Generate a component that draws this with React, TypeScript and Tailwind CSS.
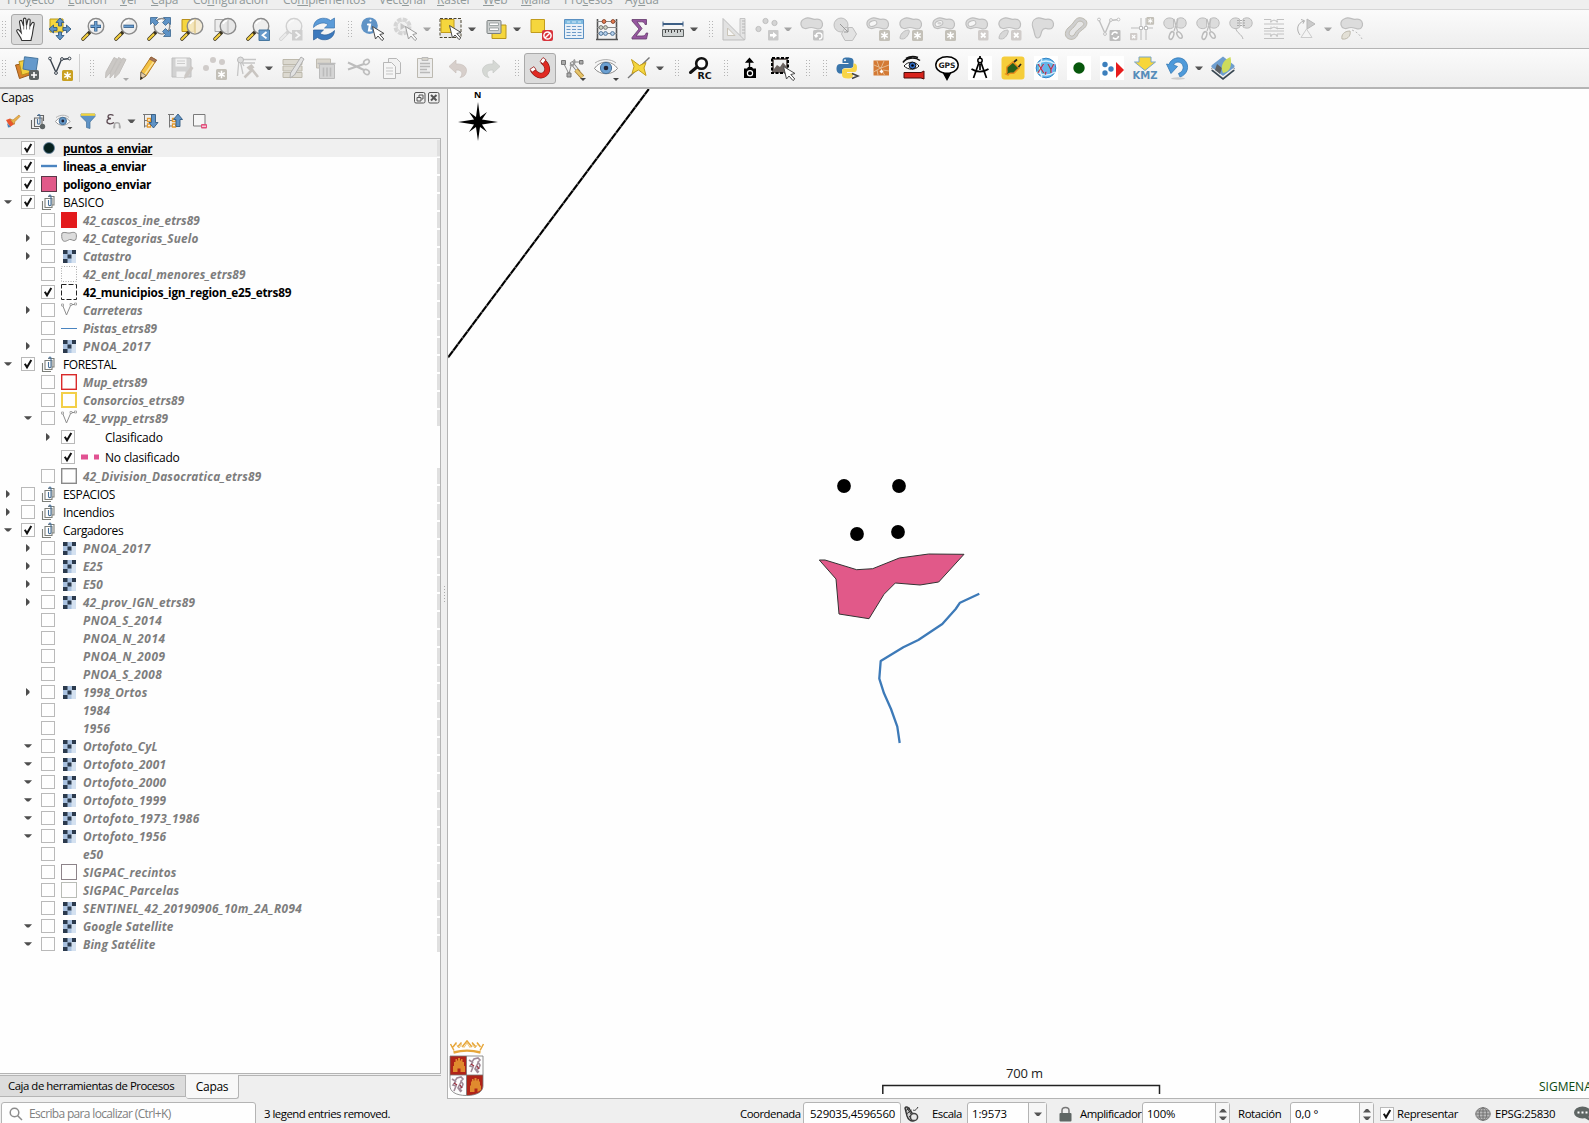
import React from "react";

type P = { children?: React.ReactNode };

/* ---------- shared building blocks ---------- */

const Svg = ({ children }: P) => (
  <svg width="24" height="24" viewBox="0 0 24 24" fill="none" className="shrink-0 overflow-visible">
    {children}
  </svg>
);

const Cell = ({ children, on }: P & { on?: boolean }) => (
  <div className="flex h-8 w-[33px] shrink-0 items-center">
    <div
      className={
        on
          ? "flex h-[31px] w-8 items-center rounded-[3px] border border-[#aaa] bg-[#dcdcdc] pl-[3px]"
          : "flex h-[31px] w-8 items-center pl-1"
      }
    >
      <Svg>{children}</Svg>
    </div>
  </div>
);

const Arrow = ({ dim }: { dim?: boolean }) => (
  <div className="flex w-3 shrink-0 justify-start">
    <svg width="8" height="5" viewBox="0 0 8 5">
      <path d="M0 .5h8L5 4H3z" fill={dim ? "#a5a5a5" : "#555"} />
    </svg>
  </div>
);

const Dots = () => (
  <svg width="5" height="17" viewBox="0 0 5 17" className="shrink-0">
    {[0, 3, 6, 9, 12, 15].map((y) => (
      <g key={y} fill="#b5b5b5">
        <rect x="0" y={y} width="1" height="1" />
        <rect x="3" y={y} width="1" height="1" />
      </g>
    ))}
  </svg>
);

const Grip = () => (
  <div className="flex w-4 shrink-0 justify-start pl-[7px]">
    <Dots />
  </div>
);

/* ---------- icon fragments ---------- */

const Lens = ({ dim, half }: { dim?: boolean; half?: string }) => (
  <g opacity={dim ? 0.35 : 1}>
    <path d="M8.5 15.5 2 22" stroke={dim ? "#999" : "#3a3320"} strokeWidth="3.6" strokeLinecap="round" />
    <path d="M6.5 17.5 2 22" stroke={dim ? "#ddd" : "#f3cf3f"} strokeWidth="2.2" strokeLinecap="round" />
    <circle cx="15" cy="9.3" r="7.8" fill={half ?? "#ececec"} fillOpacity=".85" stroke="#8b8b8b" strokeWidth="1.4" />
    <path d="M10 7a6 6 0 0 1 5-3.7" stroke="#fff" strokeWidth="1.6" />
  </g>
);

const Star = ({ x = 13, y = 13, c = "#c3c0b8" }: { x?: number; y?: number; c?: string }) => (
  <g transform={`translate(${x} ${y})`}>
    <rect width="11" height="11" rx="1.5" fill={c} />
    <path d="M5.5 1.8v7.4M2.2 3.7l6.6 3.6M2.2 7.3l6.6-3.6" stroke="#fff" strokeWidth="1.5" />
  </g>
);

const Cross = ({ x = 13, y = 13 }: { x?: number; y?: number }) => (
  <g transform={`translate(${x} ${y})`}>
    <rect width="10.5" height="10.5" rx="1.5" fill="#d0ccca" />
    <path d="m3 3 4.5 4.5M7.5 3 3 7.5" stroke="#fff" strokeWidth="1.8" />
  </g>
);

const Blob = ({ d }: { d?: string }) => (
  <path
    d={d ?? "M5 1.5c4-2 7 1 10 .8 4-.6 7 .5 7.5 4.2.4 4-2 6-5.5 5.3-3-.8-5-2-8-1-3.5 1.5-7 .8-8-3C.5 5 2 2.800 5 1.500z"}
    fill="#dcdcdc"
    stroke="#bebebe"
    strokeWidth="1.2"
  />
);

const Hole = () => <ellipse cx="7" cy="6.5" rx="4" ry="2.6" fill="#f6f6f6" stroke="#bebebe" transform="rotate(-20 7 6.5)" />;
const Leaf = () => <path d="M1 21.5c0-4 3-8 8.5-8.5 1.5 0 .8 4-2 7-2 2-4 2.5-6.5 1.5z" fill="#d8d8d8" stroke="#bebebe" />;

const Cursor = ({ x = 11, y = 9 }: { x?: number; y?: number }) => (
  <path transform={`translate(${x} ${y})`} d="M.5.5 12 7.5l-4.2 1 4 4.5-1.8 1.6-4-4.6L3.500 13z" fill="#fff" stroke="#4a4a4a" />
);

const Scissor = () => (
  <g stroke="#bcbcbc" fill="#dcdcdc">
    <path d="M10.500 2C6-.5.500 1.500.8 6.500c.4 4.600 6.200 7 10 3.500zM14 2c4-2.500 9-1 9.200 4 0 4.800-5 6.500-9.200 4z" />
    <path d="m11 2 3.500 12M15 2l-4 12" strokeWidth="1.2" />
    <ellipse cx="8.5" cy="18.5" rx="2" ry="4" transform="rotate(20 8.5 18.5)" fill="#f5f5f5" strokeWidth="1.5" />
    <ellipse cx="16.5" cy="18" rx="2" ry="3.7" transform="rotate(-35 16.5 18)" fill="#f5f5f5" strokeWidth="1.5" />
  </g>
);

const VNodes = ({ c = "#3a434d" }: { c?: string }) => (
  <g stroke={c} strokeWidth="1.4">
    <path d="m2 3 6 13.500L13.500 3.500 22 2.500" />
    <g fill="#fff" strokeWidth="1">
      <circle cx="2" cy="2.5" r="1.4" />
      <circle cx="8" cy="17" r="1.4" />
      <circle cx="14" cy="3" r="1.4" />
      <circle cx="21.5" cy="2.5" r="1.4" />
    </g>
  </g>
);

const MiniArrow = () => <path d="M19 22h6l-3 3z" fill="#444" />;

/* ---------- first toolbar ---------- */

const NavigationBar = () => (
  <div className="flex h-[38px] shrink-0 items-center bg-linear-to-b from-[#fbfbfb] to-[#eeeeee]">
    <div className="flex w-[11px] shrink-0 pl-[2px]">
      <Dots />
    </div>
    <Cell on>
      <path d="M6.8 23.500c-.6-3-3.800-6.500-5-9.300-.5-1.500 1.200-2.300 2.300-1l2.200 2.600L4.500 5c-.2-1.800 2-2.200 2.500-.5L8.600 9 8.500 2.500c0-1.800 2.300-1.800 2.500 0L11.500 8.500l1.300-5.500c.4-1.600 2.500-1.200 2.400.5L14.800 9.500 17 6c.8-1.300 2.500-.5 2.200 1-1 4-1.200 6-1.700 9.500-.3 2.500-1.300 4.500-1.500 7z" fill="#fff" stroke="#333" strokeWidth="1.1" />
      <path d="M8.700 8.500v4M11.500 8.500v4M14.700 9.500v3" stroke="#555" strokeWidth=".8" />
    </Cell>
    <Cell>
      <path d="M2 2h13v13H2z" fill="#f5d63d" stroke="#b89a1c" />
      <path d="M12 1 16 5.500h-2.500V9h-3V5.500H8zM12 23l4-4.500h-2.500V15h-3v3.500H8zM1 12l4.500-4v2.500H9v3H5.500V16zM23 12l-4.500-4v2.500H15v3h3.500V16z" fill="#5f93c6" stroke="#335b82" strokeWidth=".9" />
    </Cell>
    <Cell>
      <Lens />
      <path d="M14.800 4v10.500M9.500 9.300H20" stroke="#315b86" strokeWidth="3.2" />
      <path d="M14.800 4.500v9.500M10 9.300h9.500" stroke="#6a9fd2" strokeWidth="1.6" />
    </Cell>
    <Cell>
      <Lens />
      <path d="M9.500 9.300H20" stroke="#315b86" strokeWidth="3.2" />
      <path d="M10 9.300h9.500" stroke="#6a9fd2" strokeWidth="1.6" />
    </Cell>
    <Cell>
      <Lens />
      <path d="M3.500.5h7l-2 2 3 3-3 3-3-3-2 2zM23.500.5v7l-2-2-3 3-3-3 3-3-2-2zM23.500 19.500h-7l2-2-3-3 3-3 3 3 2-2z" fill="#5f93c6" stroke="#3b6790" strokeWidth=".8" />
    </Cell>
    <Cell>
      <path d="M2 2.500h12v12H2z" fill="#f5d63d" stroke="#b8901c" />
      <Lens half="#f4ead0" />
      <path d="M15 2v14.500" stroke="#d8ba68" />
    </Cell>
    <Cell>
      <path d="M2 2.500h12v12H2z" fill="#ededed" stroke="#a5a5a5" />
      <Lens half="#e4e4e4" />
      <path d="M15 2v14.500" stroke="#bbb" />
    </Cell>
    <Cell>
      <Lens />
      <path d="M13 13h10.500v10.500H13z" fill="#6599cb" stroke="#47779f" />
      <path d="m20.500 15-4 3.200 4 3.200" stroke="#fff" strokeWidth="1.8" />
    </Cell>
    <Cell>
      <Lens dim />
      <path d="M13 13h10.500v10.500H13z" fill="#cfcfcf" />
      <path d="m16.500 15 4 3.200-4 3.200" stroke="#f6f6f6" strokeWidth="1.8" />
    </Cell>
    <Cell>
      <path d="M1.500 10.500C1.500 1 13-1 18.500 3.500L22.500 1v10h-10l3.500-3.300C12.500 4.500 6 6 1.500 10.500z" fill="#5b9bd8" stroke="#3973ad" strokeWidth=".7" />
      <path d="M22.500 13.500c0 9.500-11.500 11.500-17 7L1.500 23V13h10L8 16.300c3.500 3.200 10 1.700 14.500-2.800z" fill="#3c79bd" stroke="#2d5f98" strokeWidth=".7" />
    </Cell>
    <Grip />
    <Cell>
      <circle cx="8.5" cy="8.7" r="8.3" fill="#5f93c6" />
      <path d="M9.500 3.500v.1M7 7.500h2l-1 6h2" stroke="#fff" strokeWidth="2.2" strokeLinecap="round" />
      <Cursor x={11} y={9} />
    </Cell>
    <Cell>
      <g opacity=".5">
        <circle cx="8.500" cy="9.500" r="7.500" fill="#e3e3e3" stroke="#b5b5b5" strokeWidth="3" strokeDasharray="4.5 1.400" />
        <circle cx="8.500" cy="9.500" r="5.500" fill="#eee" stroke="#aaa" />
        <path d="m6.500 6 5.500 3.500-5.500 3.500z" fill="#999" />
        <Cursor x={11} y={9} />
      </g>
    </Cell>
    <Arrow dim />
    <Cell>
      <path d="M1 1.500h21v19H1z" stroke="#4a4430" strokeDasharray="3 1.5" fill="#e9e9e9" />
      <path d="M2 2.500h13v13H2z" fill="#f5d63d" stroke="#c29c1c" />
      <Cursor x={10} y={8} />
    </Cell>
    <Arrow />
    <Cell>
      <path d="M8 8h14v13.500H8z" fill="#f5d63d" stroke="#b8961c" />
      <rect x="3" y="3.500" width="14" height="13" rx="1" fill="#cdd0d0" stroke="#7b8080" />
      <path d="M5.500 6h9v2.500h-9zM5.500 11h9v2.500h-9z" fill="#fff" stroke="#8d9696" strokeWidth=".8" />
    </Cell>
    <Arrow />
    <Cell>
      <path d="M2 2.500h13.500v13H2z" fill="#f5d63d" stroke="#c29c1c" />
      <rect x="13" y="13" width="11" height="11" rx="2" fill="#d8343c" />
      <circle cx="18.5" cy="18.5" r="3.6" stroke="#fff" strokeWidth="1.5" />
      <path d="m16 21 5-5" stroke="#fff" strokeWidth="1.5" />
    </Cell>
    <Cell>
      <path d="M2.500 2.500h19v19h-19z" fill="#e9f1f8" stroke="#5a90c2" />
      <path d="M3 3h18v4H3z" fill="#7fbbe0" />
      <path d="M4.500 9.500h4M4.500 12.500h4M4.500 15.500h4M4.500 18.500h4M10 9.500h4M10 12.500h4M10 15.500h4M10 18.500h4M15.500 9.500h4M15.500 12.500h4M15.500 15.500h4M15.500 18.500h4" stroke="#6c9ac8" />
      <path d="M5 5h3M10 5h4M16 5h3" stroke="#d9ecf8" />
    </Cell>
    <Cell>
      <path d="M2.500 2v20M21.500 2v20M1 22.500h22" stroke="#555" strokeWidth="1.6" />
      <path d="M2 4.500h20M2 10.500h20M2 16.500h20" stroke="#888" />
      <g stroke="#8a4a30" fill="#e87a50">
        <circle cx="9" cy="4.5" r="1.9" /><circle cx="18" cy="4.5" r="1.9" />
      </g>
      <g stroke="#777" fill="#cdd3c2">
        <circle cx="6" cy="10.5" r="1.9" /><circle cx="10.5" cy="10.5" r="1.9" />
      </g>
      <g stroke="#56789a" fill="#b7d3ee">
        <circle cx="6" cy="16.5" r="1.9" /><circle cx="10.5" cy="16.5" r="1.9" /><circle cx="17.5" cy="16.5" r="1.9" />
      </g>
    </Cell>
    <Cell>
      <path d="M4 2.500h14.500v5H17c-.5-2-1.300-2.700-3.500-2.700H9l5 6.700L8 19h6c2.500 0 3.500-1 4.200-3h1.600l-1.300 6H4v-1.500l7-8.500L4 4z" fill="#96569f" stroke="#633a6b" strokeWidth=".8" />
    </Cell>
    <Cell>
      <path d="M2 7h20" stroke="#3d5f85" strokeWidth="2" />
      <path d="M2 4.500v5M22 4.500v5" stroke="#3d5f85" />
      <path d="M1.500 12.500h21v7h-21z" fill="#cfd3d3" stroke="#5f6464" />
      <path d="M4.500 13v3M7.500 13v2M10.500 13v3M13.500 13v2M16.500 13v3M19.500 13v2" stroke="#444" />
    </Cell>
    <Arrow />
    <Grip />
    <Cell>
      <path d="M18 1.500h5v21h-5z" fill="#e4e4e4" stroke="#c4c4c4" />
      <path d="M20 4h3M20 7h3M20 10h3M20 13h3M20 16h3" stroke="#b5b5b5" />
      <path d="M1 1.500v21.500h21.500z" fill="#e2e2e2" stroke="#bdbdbd" />
      <path d="M5.500 11v7.500H13z" fill="#f6f6f6" stroke="#c9c4b8" />
    </Cell>
    <Cell>
      <g fill="#d4d4d4" stroke="#bfbfbf"><circle cx="3.5" cy="12" r="2.6" /><circle cx="10.5" cy="4" r="2.6" /><circle cx="19.5" cy="6" r="2.6" /></g>
      <rect x="13" y="13" width="10.5" height="10.5" rx="1" fill="#c9c9c9" />
      <path d="M15 17h3v-2l4 3.300-4 3.200v-2h-3z" fill="#fff" />
    </Cell>
    <Arrow dim />
    <Cell>
      <Blob />
      <rect x="13" y="13" width="10.5" height="10.5" rx="1.5" fill="#c3c3c3" />
      <path d="M16 19a3 3 0 1 1 3 3M14.500 18l1.500 2 2-1.500" stroke="#fff" strokeWidth="1.3" />
    </Cell>
    <Cell>
      <circle cx="8" cy="8" r="7" fill="#dcdcdc" stroke="#bebebe" />
      <path d="M12 10.500h7.500l4 6.500-4 6.500H12L8.500 17z" fill="#e3e3e3" stroke="#bebebe" />
      <path d="m7 7 8 8m0-4v4h-4" stroke="#999" />
    </Cell>
    <Cell><Blob /><Hole /><Star /></Cell>
    <Cell><Blob /><Leaf /><Star /></Cell>
    <Cell><Blob /><Hole /><ellipse cx="7.5" cy="6.3" rx="2.2" ry="1.2" fill="#d0d0d0" /><Star /></Cell>
    <Cell><Blob /><Hole /><Cross /></Cell>
    <Cell><Blob /><Leaf /><Cross /></Cell>
    <Cell>
      <Blob d="M5 1.500c4-2 7 1 10 .8 4-.6 7 .5 7.500 4.200.4 4-2 6-5.500 5.300-3-.8-5-.5-6 2C9.500 17 10 21 6.500 21 3 21 4 15 2 11 .5 7 1.500 3 5 1.500z" />
    </Cell>
    <Cell>
      <path d="M20 2c4 2 3.500 6 .5 9-3 2.500-6 4-7 7-1.500 4-6 5.500-9.500 3.500-4-2.500-3-7.500 0-10.500C7 8.500 8.500 7 10.500 4 13 0 17 0 20 2z" fill="#cfcfcf" stroke="#bdbab0" />
      <path d="M18.500 5c2 1 1.500 3-.5 4.500-3 2.500-5.500 4-7 7-1 2.500-3 3.200-4.800 2-1.800-1.500-1-4 1-6C9 11 11 9 12.500 6.500 14 4 16.500 3.500 18.500 5z" fill="#e6e6e6" stroke="#bdbab0" />
    </Cell>
    <Cell>
      <VNodes c="#c0c0c0" />
      <rect x="12.5" y="13" width="11" height="11" rx="1" fill="#bdbdbd" />
      <path d="M15 18a3 3 0 0 1 5.500-1.500M21.500 19a3 3 0 0 1-5.500 1.500" stroke="#fff" strokeWidth="1.6" />
    </Cell>
    <Cell>
      <path d="M11 1v22M16 1v22M1 11h22" stroke="#d0d0d0" strokeWidth="1.6" />
      <path d="M9.500 9.500h3v3h-3zM14.500 9.500h3v3h-3z" fill="#fff" stroke="#bbb" />
      <g transform="translate(15 0) scale(.7)"><Star x={2} y={0} /></g>
      <g transform="translate(0 16) scale(.7)"><Cross x={0} y={0} /></g>
    </Cell>
    <Cell><Scissor /></Cell>
    <Cell><Scissor /></Cell>
    <Cell>
      <path d="M10.500 2C6-.5.500 1.500.8 6.500c.4 4.600 6.200 7 10 3.500zM14 2c4-2.500 9-1 9.200 4 0 4.800-5 6.500-9.200 4z" fill="#dcdcdc" stroke="#bcbcbc" />
      <path d="M8 3.500h8M8 6h8M8 8.500h8" stroke="#aaa" strokeDasharray="2 1" />
      <path d="M7 11c0 5 6 6 7 11" stroke="#b5b5b5" />
    </Cell>
    <Cell>
      <path d="M2 2.500h7v3M22 2.500h-7v3M2 7h20M2 11.500h7v-2M22 11.500h-7v-2M2 14h20M2 17h7v3M22 17h-7v3M2 21.500h20M8 5l4-2 4 2M8 12l4-2 4 2M8 19l4-2 4 2" stroke="#c2c2c2" />
    </Cell>
    <Cell>
      <path d="M12 2v10l8-5z" fill="#cbcbcb" stroke="#b8b8b8" />
      <path d="M6 20.500 11.500 12l5.500 8.500z" fill="#f4f4f4" stroke="#ccc" />
      <path d="M5 18C1 13 2 6 9 4M6 2.500l3.500 1.200-1.500 3" stroke="#b0b0b0" />
    </Cell>
    <Arrow dim />
    <Cell>
      <Blob />
      <path d="M2 22c-1-4 2-8 8-8 1 3-1 9-8 8z" fill="#e3e0d6" stroke="#bdb9ac" />
      <path d="M12 13c5 2 8 5 10 9" stroke="#bbb" strokeDasharray="2 2" />
    </Cell>
  </div>
);

/* ---------- second toolbar ---------- */

const EditingBar = () => (
  <div className="flex h-[38px] shrink-0 items-center bg-linear-to-b from-[#fbfbfb] to-[#eeeeee]">
    <div className="flex w-[11px] shrink-0 pl-[2px]">
      <Dots />
    </div>
    <Cell>
      <path d="m.5 9 11-2 3 12-10 3.500z" fill="#d9822b" stroke="#9a5a1c" />
      <path d="m4 5.500 11-2 3 12-11 3.500z" fill="#f3cf3f" stroke="#b8901c" />
      <path d="m9.500.8 13.500 1.700-2 13-13-2.500z" fill="#6599cb" stroke="#47779f" />
      <rect x="14" y="14" width="10" height="10" rx="2" fill="#5c6363" />
      <path d="M19 16v6M16 19h6" stroke="#fff" strokeWidth="1.6" />
    </Cell>
    <Cell><VNodes /><Star x={14} y={14} c="#c9a021" /></Cell>
    <div className="flex w-[23px] shrink-0 items-center gap-[10px] pl-[2px]">
      <div className="h-7 w-px shrink-0 bg-[#cfcfcf]" />
      <Dots />
    </div>
    <Cell>
      <g fill="#cbc8c5" stroke="#c3c0bd">
        <path d="M10 1.500 13 3 6 17l-4.500 5 .5-6zM14.500 1.500l3 1.500-7 14-4.500 5 .5-6zM19 2l3 1.500L15 17.500 10.500 22l.5-5.500z" />
      </g>
      <path d="M19 22h6l-3 3z" fill="#aaa" />
    </Cell>
    <Cell>
      <path d="m14 1 5.500 3L9 20l-5.500 3.500L4 16z" fill="#f4c343" stroke="#b57a22" />
      <path d="m14 1 5.500 3-1.300 2.200-5.600-3z" fill="#a8765a" stroke="#7a5240" strokeWidth=".6" />
      <path d="m16.500 6-9.800 14" stroke="#fbe29a" strokeWidth="1.4" />
      <path d="m4 16 5 3.500-5.500 4z" fill="#e7cda8" stroke="#555" strokeWidth=".7" />
      <path d="m3.900 20.500-.6 3.200 2.500-1.700z" fill="#222" />
    </Cell>
    <Cell>
      <path d="M2 2h18l1 1v18H2z" fill="#d2d2d2" stroke="#c0c0c0" />
      <path d="M5.500 2.500h11v8h-11zM6.500 15.500h9v5.500h-9z" fill="#f2f2f2" />
      <path d="M7 5h8M7 7.500h8" stroke="#ccc" />
      <path d="m21 10 2.500 2-6 9-3.500 2 .5-4z" fill="#ccc8c5" />
    </Cell>
    <Cell>
      <g fill="#d0ccca"><circle cx="3" cy="12" r="3" /><circle cx="10" cy="4" r="3" /><circle cx="19" cy="6" r="3" /></g>
      <Star />
    </Cell>
    <Cell>
      <path d="M3 3 1.500 20M4 4l3 14M4 3.500h16M5 5l3 5M7 7h12" stroke="#c6c6c6" strokeWidth="1.3" />
      <circle cx="4.500" cy="4" r="3" fill="#ddd" stroke="#bbb" />
      <path d="m8.500 21.500 8-8M14 11l8 10" stroke="#c9c5c1" strokeWidth="2.6" />
      <path d="m10.500 11.500 5-3.500 3 3.500-5 3z" fill="#c9c5c1" />
    </Cell>
    <Arrow />
    <Cell>
      <path d="M2 3.500h19v5H2zM2 10h19v5H2zM2 16.500h19v5H2z" fill="#dcd9d0" stroke="#bdb9ac" />
      <path d="m20 1 3 2-9.500 16-4.500 3 .5-5z" fill="#e2e2e2" stroke="#b0b0b0" />
    </Cell>
    <Cell>
      <path d="M2.500 3h14v9h-14z" fill="#dad6cd" stroke="#c0bcb2" />
      <path d="M5.500 8.500h15V22.500h-15z" fill="#d4d4d4" stroke="#bbb" />
      <path d="M3.500 7.500h18M9.500 11.500v9M13 11.500v9M16.500 11.500v9" stroke="#bbb" strokeWidth="1.6" />
    </Cell>
    <Cell>
      <path d="M1 6.500 17 14M1 13.500 17 8" stroke="#bdbdbd" strokeWidth="2" />
      <ellipse cx="19.5" cy="6" rx="3" ry="2.2" transform="rotate(-35 19.5 6)" stroke="#bdbdbd" strokeWidth="1.6" />
      <ellipse cx="19.5" cy="16" rx="3" ry="2.2" transform="rotate(35 19.5 16)" stroke="#bdbdbd" strokeWidth="1.6" />
    </Cell>
    <Cell>
      <path d="M8.500 2.500h8l4 4v11h-12z" fill="#f2f2f2" stroke="#b8b8b8" />
      <path d="M3.500 6.500h8l4 4v12h-12z" fill="#f6f6f6" stroke="#b8b8b8" />
      <path d="M6 12h7M6 15h7M6 18h7" stroke="#c5c5c5" />
    </Cell>
    <Cell>
      <path d="M4.500 2.500h15v19h-15z" fill="#ededed" stroke="#bcb9b0" />
      <path d="M9 1.500h6v3H9z" fill="#d5d2ca" stroke="#bbb" />
      <path d="M7 7.500h10M7 10.500h10M7 13.500h7M7 16.500h10" stroke="#b9b9b9" strokeWidth="1.3" />
    </Cell>
    <Cell>
      <path d="M3 10.500 10 4v4c8-.5 12 4 10 9-1 3-3 4-6 4.500 3-2.500 3-8-4-7.500V17z" fill="#d7cfcb" stroke="#c8c0bc" strokeWidth=".7" />
    </Cell>
    <Cell>
      <path d="M21 10.500 14 4v4C6 7.500 2 12 4 17c1 3 3 4 6 4.500-3-2.500-3-8 4-7.500V17z" fill="#d5d8d4" stroke="#c6c9c5" strokeWidth=".7" />
    </Cell>
    <Grip />
    <Cell on>
      <path d="M4.500 13.500C7.500 19 13 21.500 17 18s2.500-9-2.800-13.200" stroke="#7d1613" strokeWidth="5.6" />
      <path d="M4.500 13.500C7.500 19 13 21.500 17 18s2.500-9-2.800-13.200" stroke="#e02a23" strokeWidth="4.400" />
      <path d="m2 13.200 4-2.600 2 3-4 2.700zM12 5.500l3-4 3 2.300-3 4z" fill="#fff" stroke="#9a1b18" strokeWidth=".8" />
    </Cell>
    <Cell>
      <path d="m2 6 6 12 3-12h9" stroke="#888" />
      <path d="M.5 4.500h4v4h-4zM6 17h4v4H6zM18.500 4.500h3.500v3.500h-3.500z" fill="#aaa" stroke="#777" />
      <path d="m10 6 8 10" stroke="#7e7e7e" strokeWidth="3.5" />
      <path d="m10.500 6.500 7 9" stroke="#eee" strokeWidth="1.8" />
      <path d="M9 8.500c2 2 6-.5 4-5" stroke="#999" strokeWidth="2" />
      <path d="m15 14 6.500 7" stroke="#a07830" strokeWidth="4.5" />
      <path d="m15 14 6.500 7" stroke="#e6c469" strokeWidth="3" />
      <MiniArrow />
    </Cell>
    <Cell>
      <path d="M.5 12.500C6 4 18 4 23.500 12.500 18 19.500 6 19.500.5 12.500z" fill="#fbfbfb" stroke="#8b8b8b" />
      <path d="M1 7C7 2.500 17 2.500 22 7" stroke="#aaa" />
      <circle cx="12" cy="12" r="5.6" fill="#6ba0d2" stroke="#4a7299" />
      <circle cx="12" cy="12" r="2.3" fill="#223" />
      <MiniArrow />
    </Cell>
    <Cell>
      <path d="M1 22 22.500 1.500" stroke="#777" strokeWidth="1.4" />
      <path d="M4.500 3.500 12.500 9.500 19 6.500 17 12l2 7.500L11.500 14 5 17.500 7 10.500z" fill="#f5d63d" stroke="#c29c1c" />
    </Cell>
    <Arrow />
    <Grip />
    <Cell>
      <circle cx="13.5" cy="7.5" r="5.3" stroke="#111" strokeWidth="2.6" fill="#fff" />
      <path d="m9 11-6.500 5.500" stroke="#111" strokeWidth="3" strokeLinecap="round" />
      <text x="9.5" y="22.5" className="font-['DejaVu_Sans'] text-[9.5px] font-bold" fill="#111">RC</text>
    </Cell>
    <Grip />
    <Cell>
      <path d="M12.500 11V4M9.500 6l3-3.500 3 3.500z" stroke="#000" strokeWidth="1.4" fill="#000" />
      <path d="M7 12.500h3l1-1.500h4l1 1.500h3V22H7z" fill="#000" />
      <circle cx="13" cy="17.2" r="2.6" stroke="#fff" strokeWidth="1.2" />
    </Cell>
    <Cell>
      <path d="M2 2h16v15H2z" fill="#6b6360" stroke="#000" strokeWidth="2" strokeDasharray="3 1.5" />
      <path d="m4 13 3-4 3 2 3-4.500 3 3.500V4H4z" fill="#f2f2f2" />
      <Cursor x={13} y={10} />
    </Cell>
    <Grip />
    <div className="flex w-[17px] shrink-0 justify-start pl-2">
      <Dots />
    </div>
    <Cell>
      <path d="M11 1.500c-4 0-4.500 1.500-4.500 3.500v2h6v1H4c-3 0-3.500 3-3.500 5s1 4.500 3.500 4.500h2V15c0-2 1.500-3 3.500-3h5c2 0 3-1 3-3V5c0-2.500-2-3.500-6.500-3.500z" fill="#3b76ab" />
      <path d="M12 22.500c4 0 5-1.500 5-3.500v-2h-6v-1h7.500c2 0 2.500-2 2.500-4.500S20 7.500 18 7.500h-.5V9.500c0 2-1.500 3-3.500 3H9c-1.500 0-3 1-3 3V19c0 2.500 2 3.500 6 3.500z" fill="#f8d548" />
      <circle cx="9" cy="4.3" r="1" fill="#fff" />
      <path d="m16 17.500 6 2.500-6 2.500" stroke="#444" strokeWidth="1.5" />
    </Cell>
    <Cell>
      <path d="M4.500 4.500h15.500v15H4.500z" fill="#d47a35" />
      <path d="m5 9 7 3 3-7M4.500 16l7-4 4 7M12 12l8-3M14 14l6 1M8 5l2 6M9 19l-1-5" stroke="#e8c9a4" strokeWidth=".8" />
      <path d="m10.500 15.500 2-2 2 2-2 2z" fill="#fff" />
    </Cell>
    <Cell>
      <path d="M1 6.500C4 1.500 13 .5 18 4.500M4 2.500C8 0 12 0 16 1.500" stroke="#111" strokeWidth="1.6" />
      <path d="M2 10c4-5 11-5 15 0-4 4.500-11 4-15 0z" fill="#fff" stroke="#111" />
      <circle cx="10.5" cy="9.5" r="3.4" fill="#2f6bc4" stroke="#111" />
      <circle cx="10.5" cy="9.5" r="1.3" fill="#000" />
      <path d="M2 16.500h17l3-1.500v8l-3-1H2z" fill="#d8231c" stroke="#4a0c0a" />
    </Cell>
    <Cell>
      <path d="M12 23.500 8.500 17C3 15.500.8 12.500.8 9 .8 4 5.500.8 12 .8S23.200 4 23.200 9c0 3.500-2.200 6.500-7.700 8z" fill="#fff" stroke="#000" strokeWidth="1.5" />
      <path d="M12 23.500 7.500 16c3 .8 6 .8 9 0z" fill="#000" />
      <text x="12" y="11.5" textAnchor="middle" className="font-['DejaVu_Sans'] text-[7.5px] font-bold" fill="#222">GPS</text>
    </Cell>
    <Cell>
      <path d="M0 0h24v24H0z" fill="#fff" />
      <circle cx="12" cy="4.5" r="2.2" stroke="#000" strokeWidth="1.5" />
      <path d="M12 0v2.500M11 6.500 5.500 22M13 6.500 18.500 22M3.500 13c5 3.500 12 3.500 17 0M12 8v6" stroke="#000" strokeWidth="1.7" />
    </Cell>
    <Cell>
      <rect x=".5" y=".5" width="23" height="23" rx="3" fill="#f5cd3a" />
      <path d="M5 18c2-1 0-4 1-7l6-5 6 6-5 5c-3 1-5-1-6 2z" fill="#27601c" stroke="#e88b1c" strokeWidth="1.5" />
      <path d="m13 6 3-2.500M17.500 11 20 8" stroke="#222" strokeWidth="1.7" />
    </Cell>
    <Cell>
      <path d="M0 0h24v24H0z" fill="#fff" />
      <circle cx="12" cy="12" r="9.8" fill="#63b5ea" stroke="#2d83c6" />
      <path d="M3 8c6-4 12-4 18 0M3 16c6 4 12 4 18 0M8 3c-3 6-3 12 0 18" stroke="#d9f0fc" strokeWidth="1.3" />
      <text x="12" y="16.5" textAnchor="middle" textLength="17" lengthAdjust="spacingAndGlyphs" className="font-['Open_Sans'] text-[12px]" fill="#d3202c">X,Y</text>
    </Cell>
    <Cell>
      <path d="M0 0h24v24H0z" fill="#fff" />
      <circle cx="12" cy="12" r="5.7" fill="#07570c" />
    </Cell>
    <Cell>
      <path d="M0 0h24v24H0z" fill="#fff" />
      <g fill="#3d80bd"><circle cx="5" cy="8.5" r="2.7" /><circle cx="5" cy="17" r="2.7" /><circle cx="11" cy="13" r="2.7" /></g>
      <path d="M16 6v16l8-8z" fill="#e81c1c" />
    </Cell>
    <Cell>
      <path d="M6 1h12v5h4.500L12 14.500 1.500 6H6z" fill="#f7d63b" stroke="#7ba6c9" />
      <text x="12" y="23" textAnchor="middle" textLength="25" lengthAdjust="spacingAndGlyphs" className="font-['DejaVu_Sans'] text-[10.5px] font-bold" fill="#568cb9">KMZ</text>
    </Cell>
    <Cell>
      <path d="M3 8.500C5 2 14-.5 19 4.500c5 5.500 2.500 14-5 16.500l-1.500-3.500c5-2 6-7 3-10C12.500 5 9 6 7.500 9l4 1.500-6.500 7L.5 8z" fill="#4e9ada" stroke="#3478b5" strokeWidth=".8" />
      <ellipse cx="12" cy="22.5" rx="7" ry="1.2" fill="#ccc" />
    </Cell>
    <Arrow />
    <Cell>
      <path d="m12 10.500 12 4-12 9.500-12-9.500z" fill="#33434f" />
      <path d="m12 9 12 3.500-12 9.500-12-9.500z" fill="#f4f4f4" stroke="#555" strokeWidth=".4" />
      <path d="m12 .5 11 8.500c1 1 .5 2 0 2.500L12 20 1 11.500C0 10.500 0 10 1 9z" fill="#6e9ecf" />
      <path d="m6 8 5 4-2 6-5-4z" fill="#5b5f62" />
      <path d="M12 17C8 9 14 3 19.500 1 21 8 20 16 12 17z" fill="#cddc5c" />
    </Cell>
  </div>
);

/* ---------- menu bar ---------- */

const Menu = ({ w, a, u, b }: { w: string; a: string; u: string; b: string }) => (
  <span className={`${w} shrink-0 whitespace-nowrap`}>
    {a}
    <span className="underline underline-offset-1">{u}</span>
    {b}
  </span>
);

const MenuBar = () => (
  <div className="h-[9px] shrink-0 overflow-hidden bg-[#efefef]">
    <div className="-mt-[9px] flex pl-[7px] text-[12px] leading-[18px] tracking-[-0.25px] text-[#919a9a]">
      <Menu w="w-[61px]" a="Pro" u="y" b="ecto" />
      <Menu w="w-[52px]" a="" u="E" b="dición" />
      <Menu w="w-[31px]" a="" u="V" b="er" />
      <Menu w="w-[42px]" a="" u="C" b="apa" />
      <Menu w="w-[90px]" a="Co" u="n" b="figuración" />
      <Menu w="w-[96px]" a="Co" u="m" b="plementos" />
      <Menu w="w-[58px]" a="Vect" u="o" b="rial" />
      <Menu w="w-[46px]" a="" u="R" b="aster" />
      <Menu w="w-[38px]" a="" u="W" b="eb" />
      <Menu w="w-[43px]" a="" u="M" b="alla" />
      <Menu w="w-[61px]" a="Pro" u="c" b="esos" />
      <Menu w="w-[40px]" a="Ay" u="u" b="da" />
    </div>
  </div>
);

/* ---------- layer tree ---------- */

type Sym =
  | "point" | "line" | "pink" | "group" | "red" | "poly" | "raster" | "dotted" | "dashed"
  | "vline" | "thin" | "redbox" | "yellowbox" | "greybox" | "recintos" | "parcelas" | "pinkdash" | "none";

type Row = {
  t: string;
  lv: 1 | 2 | 3;
  s: Sym;
  on?: boolean;
  ex?: "open" | "closed";
  k?: "bold" | "plain";
  ls?: string;
};

const rows: Row[] = [
  { t: "puntos_a_enviar", lv: 1, s: "point", on: true, k: "bold", ls: "tracking-[-0.42px]" },
  { t: "lineas_a_enviar", lv: 1, s: "line", on: true, k: "bold", ls: "tracking-[-0.42px]" },
  { t: "poligono_enviar", lv: 1, s: "pink", on: true, k: "bold", ls: "tracking-[-0.36px]" },
  { t: "BASICO", lv: 1, s: "group", on: true, ex: "open", k: "plain", ls: "tracking-[-0.2px]" },
  { t: "42_cascos_ine_etrs89", lv: 2, s: "red", ls: "tracking-[0.05px]" },
  { t: "42_Categorias_Suelo", lv: 2, s: "poly", ex: "closed", ls: "tracking-[0.14px]" },
  { t: "Catastro", lv: 2, s: "raster", ex: "closed" },
  { t: "42_ent_local_menores_etrs89", lv: 2, s: "dotted", ls: "tracking-[0.08px]" },
  { t: "42_municipios_ign_region_e25_etrs89", lv: 2, s: "dashed", on: true, k: "bold", ls: "tracking-[-0.2px]" },
  { t: "Carreteras", lv: 2, s: "vline", ex: "closed" },
  { t: "Pistas_etrs89", lv: 2, s: "thin", ls: "tracking-[0.05px]" },
  { t: "PNOA_2017", lv: 2, s: "raster", ex: "closed", ls: "tracking-[0.55px]" },
  { t: "FORESTAL", lv: 1, s: "group", on: true, ex: "open", k: "plain", ls: "tracking-[-0.4px]" },
  { t: "Mup_etrs89", lv: 2, s: "redbox" },
  { t: "Consorcios_etrs89", lv: 2, s: "yellowbox", ls: "tracking-[0.07px]" },
  { t: "42_vvpp_etrs89", lv: 2, s: "vline", ex: "open", ls: "tracking-[0.12px]" },
  { t: "Clasificado", lv: 3, s: "none", on: true, ex: "closed", k: "plain", ls: "tracking-[-0.22px]" },
  { t: "No clasificado", lv: 3, s: "pinkdash", on: true, k: "plain", ls: "tracking-[-0.22px]" },
  { t: "42_Division_Dasocratica_etrs89", lv: 2, s: "greybox", ls: "tracking-[0.2px]" },
  { t: "ESPACIOS", lv: 1, s: "group", ex: "closed", k: "plain", ls: "tracking-[-0.36px]" },
  { t: "Incendios", lv: 1, s: "group", ex: "closed", k: "plain", ls: "tracking-[-0.3px]" },
  { t: "Cargadores", lv: 1, s: "group", on: true, ex: "open", k: "plain", ls: "tracking-[-0.4px]" },
  { t: "PNOA_2017", lv: 2, s: "raster", ex: "closed", ls: "tracking-[0.55px]" },
  { t: "E25", lv: 2, s: "raster", ex: "closed", ls: "tracking-[0.2px]" },
  { t: "E50", lv: 2, s: "raster", ex: "closed", ls: "tracking-[0.2px]" },
  { t: "42_prov_IGN_etrs89", lv: 2, s: "raster", ex: "closed", ls: "tracking-[0.25px]" },
  { t: "PNOA_S_2014", lv: 2, s: "none", ls: "tracking-[0.5px]" },
  { t: "PNOA_N_2014", lv: 2, s: "none", ls: "tracking-[0.55px]" },
  { t: "PNOA_N_2009", lv: 2, s: "none", ls: "tracking-[0.55px]" },
  { t: "PNOA_S_2008", lv: 2, s: "none", ls: "tracking-[0.5px]" },
  { t: "1998_Ortos", lv: 2, s: "raster", ex: "closed", ls: "tracking-[0.3px]" },
  { t: "1984", lv: 2, s: "none", ls: "tracking-[0.3px]" },
  { t: "1956", lv: 2, s: "none", ls: "tracking-[0.3px]" },
  { t: "Ortofoto_CyL", lv: 2, s: "raster", ex: "open", ls: "tracking-[0.2px]" },
  { t: "Ortofoto_2001", lv: 2, s: "raster", ex: "open", ls: "tracking-[0.33px]" },
  { t: "Ortofoto_2000", lv: 2, s: "raster", ex: "open", ls: "tracking-[0.33px]" },
  { t: "Ortofoto_1999", lv: 2, s: "raster", ex: "open", ls: "tracking-[0.33px]" },
  { t: "Ortofoto_1973_1986", lv: 2, s: "raster", ex: "open", ls: "tracking-[0.38px]" },
  { t: "Ortofoto_1956", lv: 2, s: "raster", ex: "open", ls: "tracking-[0.33px]" },
  { t: "e50", lv: 2, s: "none", ls: "tracking-[0.2px]" },
  { t: "SIGPAC_recintos", lv: 2, s: "recintos", ls: "tracking-[0.25px]" },
  { t: "SIGPAC_Parcelas", lv: 2, s: "parcelas", ls: "tracking-[0.27px]" },
  { t: "SENTINEL_42_20190906_10m_2A_R094", lv: 2, s: "raster", ls: "tracking-[0.42px]" },
  { t: "Google Satellite", lv: 2, s: "raster", ex: "open", ls: "tracking-[0.15px]" },
  { t: "Bing Satélite", lv: 2, s: "raster", ex: "open", ls: "tracking-[0.15px]" },
];

const box = (stroke: string, w: number, dash?: string, fill = "#fefefe") => (
  <rect x={w / 2} y={w / 2} width={16 - w} height={16 - w} fill={fill} stroke={stroke} strokeWidth={w} strokeDasharray={dash} />
);

const Symbol = ({ s }: { s: Sym }) => (
  <svg width={s === "pinkdash" ? 20 : 16} height="16" viewBox={s === "pinkdash" ? "0 0 20 16" : "0 0 16 16"} fill="none" className="shrink-0">
    {s === "point" && <circle cx="8" cy="8" r="5.5" fill="#06211f" stroke="#6787a5" strokeWidth=".8" />}
    {s === "line" && <path d="M0 8h16" stroke="#4a84c0" strokeWidth="2.4" />}
    {s === "pink" && box("#5a3848", 1, undefined, "#e15989")}
    {s === "red" && <path d="M0 0h16v16H0z" fill="#e31a1c" />}
    {s === "dotted" && box("#aaa", 1, "1 1.5")}
    {s === "dashed" && box("#222", 1, "5 2")}
    {s === "redbox" && box("#d92a2a", 1.4)}
    {s === "yellowbox" && box("#f3cf48", 2)}
    {s === "greybox" && box("#8a8a8a", 1.4)}
    {s === "recintos" && box("#8c8389", 1)}
    {s === "parcelas" && box("#b9bcb6", 1)}
    {s === "thin" && <path d="M0 8.5h16" stroke="#4a84c0" />}
    {s === "group" && (
      <g stroke="#7b7e78" strokeWidth="1.1">
        <path d="M1.500 7v8.500H10" />
        <path d="M4 4.500h7v9H4zM7 2.500h6v8.500h-2" />
        <path d="M7.500 6v4.500c0 1.500 2.500 1.500 2.500 0V2.500C10 .5 8 .5 8 2.500" stroke="#48719a" />
      </g>
    )}
    {s === "poly" && <path d="M1 3c3-1.500 5 .5 8 0 3-1 6-1 6.300 1.500.2 2 .2 4-.8 5.500-2 1.500-4-1-6-.5C5.500 11 3 12.500 1.500 10 .5 8 .5 5 1 3z" fill="#dcdcdc" stroke="#8c8c8c" />}
    {s === "raster" && (
      <g>
        <path d="M2 2h13v13H2z" fill="#a9c1df" />
        <path d="M10 6h5v9h-5z" fill="#d4e1f0" />
        <path d="M6.500 10h4v5h-4z" fill="#a9c1df" />
        <path d="M2 2h4.500v4H2zM11 2h4v4h-4zM6.500 6.500h4v4h-4zM2 11h4.500v4H2z" fill="#2b3a4d" />
      </g>
    )}
    {s === "vline" && (
      <g stroke="#8e8e8e">
        <path d="m1.500 3 4 10L10 2.500h5" />
        <path d="M.5 2h2v2h-2zM9 1.500h2v2H9zM13.500 1h2v2h-2z" fill="#fff" strokeWidth=".7" />
      </g>
    )}
    {s === "pinkdash" && <path d="M1 8h7M14 8h5" stroke="#e15292" strokeWidth="5" />}
  </svg>
);

const Check = ({ on }: { on?: boolean }) => (
  <svg width="14" height="14" viewBox="0 0 14 14" fill="none" className="shrink-0">
    <rect x=".5" y=".5" width="13" height="13" fill="#fefefe" stroke="#b9b9b9" />
    {on && <path d="M3.800 6.800 6 10.300 10.300 3" stroke="#111" strokeWidth="2" />}
  </svg>
);

const Expander = ({ ex }: { ex?: "open" | "closed" }) => (
  <svg width="8" height="8" viewBox="0 0 8 8" className="shrink-0">
    {ex === "open" && <path d="M0 2.300h8L5 5.500H3z" fill="#4d4d4d" />}
    {ex === "closed" && <path d="M2 0 5.500 3v2L2 8z" fill="#4d4d4d" />}
  </svg>
);

const TreeRow = ({ r, first }: { r: Row; first: boolean }) => {
  const pad = r.lv === 1 ? "pl-1" : r.lv === 2 ? "pl-6" : "pl-[44px]";
  const h = r.lv === 3 ? "h-5" : "h-[18px]";
  const style =
    r.k === "bold"
      ? "font-bold text-black text-[11.8px]"
      : r.k === "plain"
        ? "text-black text-[12px]"
        : "font-bold italic text-[#7d7d7d] text-[11.8px]";
  const drop = r.lv !== 2 ? "mt-px" : "";
  return (
    <div className={`flex shrink-0 items-center ${pad} ${h} ${first ? "bg-[#f0f0f0]" : ""}`}>
      <Expander ex={r.ex} />
      <div className="ml-[9px] flex">
        <Check on={r.on} />
      </div>
      <div className={r.lv === 3 ? "ml-[5px] flex w-[25px]" : "ml-[6px] flex w-[22px]"}>
        <Symbol s={r.s} />
      </div>
      <span className={`whitespace-nowrap leading-[17px] ${drop} ${style} ${r.ls ?? ""} ${first ? "underline" : ""}`}>{r.t}</span>
      {r.lv !== 3 && <div className="ml-auto h-4 w-[3px] bg-[#e0e0e0]" />}
    </div>
  );
};

const LayersPanel = () => (
  <div className="flex w-[441px] shrink-0 flex-col bg-[#efefef]">
    <div className="flex h-[18px] shrink-0 items-center pl-px pr-px">
      <span className="text-[12px] leading-4 tracking-[-0.3px] text-black">Capas</span>
      <svg width="26" height="12" viewBox="0 0 26 12" fill="none" stroke="#555" className="ml-auto">
        <rect x=".5" y=".5" width="10.5" height="10.5" rx="1.5" />
        <path d="M3 5.500h4v3.500H3zM5 5V3h4v4H7.500" />
        <rect x="14.5" y=".5" width="10.5" height="10.5" rx="1.5" />
        <path d="m17 3 5.500 5.500M22.500 3 17 8.500" strokeWidth="2" />
      </svg>
    </div>
    <div className="flex h-[31px] shrink-0 items-start pl-[5px] pt-[5px]">
      <svg width="206" height="18" viewBox="5 0 206 18" fill="none">
        <path d="m6 8 4-1.500 5 5-5 3.500z" fill="#e8542e" />
        <path d="m7 11 4 4-3 .5z" fill="#4c82b5" />
        <path d="m10 7 3 1 6-5 1 1.500-5 5-1 3z" fill="#e9b24a" stroke="#b97a28" strokeWidth=".6" />
        <g stroke="#666" strokeWidth="1.1">
          <path d="M31.500 8v8.500H39M34.500 6H42v8.500h-7.500zM37 3.500h6.500V9" />
          <path d="M37.500 7v4c0 1.500 2.500 1.500 2.500 0V4c0-2-2-2-2 0" stroke="#48719a" />
        </g>
        <circle cx="42.5" cy="14.5" r="2.7" fill="#5e6464" />
        <path d="M55.500 9.500c4-5.500 11-5.500 14.500 0-4 5-11 5-14.500 0z" fill="#fff" stroke="#999" />
        <path d="M56 5.500c4-3 10-3 13 0" stroke="#b5b5b5" />
        <circle cx="62.8" cy="9" r="3.7" fill="#6699c8" stroke="#47729a" />
        <circle cx="62.8" cy="9" r="1.4" fill="#223" />
        <path d="M67.500 15h5L70 17.500z" fill="#444" />
        <path d="M81 2h14v2.500L90 10v6.500l-3.500-1V10L81 4.500z" fill="#5f93c6" stroke="#41709a" strokeWidth=".7" />
        <path d="M81 1.500h14v2.300H81z" fill="#f3d43c" />
        <path d="M113.500 3.500c-2-1.500-5.500-1-5.500 1s2 2 3 2c-2 0-4 .8-4 3 0 2.700 4.500 3 7 1" stroke="#5c4a52" strokeWidth="1.3" />
        <path d="M114.500 16v-3.500c0-2.500 5-2.500 5 0V16M114 13.500v3M120 13.500v3" stroke="#aaa" strokeWidth="1.5" />
        <path d="M127.500 7.500h8l-3 3.500h-2z" fill="#555" />
        <path d="M143 2.500h11M144.500 2.500v13M144.500 8.500h3M144.500 14h3" stroke="#777" />
        <path d="M147.500 6.500h3v3h-3zM147.500 12h3v3h-3z" fill="#fff" stroke="#e69a2c" strokeWidth="1.3" />
        <path d="M151.500 2.500h4v8h2.500l-4.500 5.500-4.500-5.500h2.500z" fill="#5f93c6" stroke="#335b82" strokeWidth=".9" />
        <path d="M168 2.500h6M169.500 2.500v13M169.500 8.500h3M169.500 14h3" stroke="#777" />
        <path d="M172.500 6.500h3v3h-3zM172.500 12h3v3h-3z" fill="#fff" stroke="#e69a2c" strokeWidth="1.3" />
        <path d="M176 14.500h4v-7h2.500L178 2l-4.500 5.500h2.500z" fill="#5f93c6" stroke="#335b82" strokeWidth=".9" />
        <path d="M193.500 2.500h11.500v11.500h-11.500z" stroke="#7a7a7a" fill="#f6f6f6" />
        <rect x="201" y="12" width="6" height="4.5" rx="1" fill="#e14f7c" />
        <path d="M202 14.200h4" stroke="#fff" />
      </svg>
    </div>
    <div className="flex min-h-0 flex-1 flex-col border-y border-r border-[#b4b4b4] bg-[#fefefe]">
      {rows.map((r, i) => (
        <TreeRow key={i} r={r} first={i === 0} />
      ))}
    </div>
    <div className="mt-px flex h-[24px] shrink-0 items-start border-t border-[#b4b4b4] text-[11.4px] tracking-[-0.46px] text-black">
      <div className="flex h-[21px] w-[186px] items-center border-b border-r border-[#b4b4b4] bg-[#dcdcdc] pl-2">
        <span className="whitespace-nowrap leading-4">Caja de herramientas de Procesos</span>
      </div>
      <div className="-mt-px flex h-6 w-[53px] items-center justify-center rounded-b-[3px] border-b border-r border-[#b4b4b4] bg-[#f8f8f8] text-[12px] tracking-[-0.3px]">
        Capas
      </div>
    </div>
  </div>
);

/* ---------- map canvas ---------- */

const Shield = () => (
  <svg width="36" height="58" viewBox="0 0 36 58" fill="none">
    <path d="M4.500 13.500c9-2.500 18-2.500 27 0" stroke="#e6a63a" strokeWidth="2.4" />
    <path d="M5 11.500 1.500 5M4 8l3.500-4.500M8.500 8l4-4.500M13 8l5-6 5 6M27 8l-4-4.500M31.500 8 28 3.500M31 11.500 34.500 5" stroke="#e6a63a" strokeWidth="1.500" />
    <path d="M7.500 5.500 10 9l2.500-3.500L15 8.500 18 4l3 4.500 2.500-3L26 9l2.500-3.500" stroke="#efc06a" />
    <path d="M1 17h33v30c0 5-5 9.500-16.500 9.500S1 52 1 47z" fill="#fdfdfd" />
    <path d="M1 17h16.500v19H1zM17.500 36H34v11c0 5-5 9.500-16.500 9.500z" fill="#b02318" />
    <path d="M4 33v-6h1v-4h1.500v-3H8v1.500h1V19h2v2.500h1V20h1.500v3H15v4h1v6h-4.500v-3.500h-3V33zM21 53v-6.500h1v-4h1V40h1.500v1.500h1V39h2v2.500h1V40H30v2.500h1v4h1V51l-3.500 2v-3.500h-3V53z" fill="#e08a2e" />
    <path d="m20 21 3 2 2-3 4-1 2 2-2 2 2 3-1 3-3 2 3 2M24 23l-3 4 3 1-2 5M29 24l-3 6 3 4" stroke="#a08a98" strokeWidth="1.600" />
    <path d="m3 40 3 2 2-3 4-1 2 2-2 2 2 3-1 3-3 2 3 2M7 42l-3 4 3 1-2 5M12 43l-3 6 3 4" stroke="#a08a98" strokeWidth="1.600" />
    <path d="M22 25l3 2M28 27l2 3M5 44l3 2M11 46l2 3" stroke="#9b2c3a" strokeWidth="1.300" />
    <path d="M1 17h33v30c0 5-5 9.500-16.500 9.500S1 52 1 47zM17.500 17v39M1 36h33" stroke="#777" strokeWidth=".8" />
  </svg>
);

const MapCanvas = () => (
  <div className="relative min-w-0 flex-1 overflow-hidden border-b border-l border-[#b4b4b4] bg-[#fefefe]">
    <svg width="1141" height="1009" viewBox="448 89 1141 1009" fill="none" className="block">
      <path d="M448 357.500 648.800 89" stroke="#000" strokeWidth="2.100" />
      <path d="M448 357.500 648.800 89" stroke="#fff" strokeOpacity=".4" strokeWidth="2.100" strokeDasharray="1 7" />
      <path d="m478 102 2 15 7-5-5 7.500 16 2.500-16 2.500 5 7.500-7-5-2 14-2-14-7 5 5-7.500-16-2.500 16-2.500-5-7.500 7 5z" fill="#000" />
      <path d="m819.300 560h5.700l31.700 9.700 16-1 26.600-10.700 29.400-4 35.300.3-25.300 27.700-18.700 3-24.700-2-11.300 11.300-15 24.400-30-4.700-3-35z" fill="#e15989" stroke="#333" />
      <path d="m979.300 593.700-19.300 9-4.300 6.300-13.400 15-24 16-15 7.300-22.600 13.700-1.400 17.700 4.700 14.600 7 15.700 6.300 17.700 2.400 16.300" stroke="#3d7ab8" strokeWidth="2.3" strokeLinejoin="round" />
      <g fill="#000">
        <circle cx="844" cy="486" r="6.9" />
        <circle cx="899" cy="486" r="6.9" />
        <circle cx="857" cy="534" r="6.9" />
        <circle cx="898" cy="532" r="6.9" />
      </g>
      <path d="M882.800 1094v-8.500h276.700v8.500" stroke="#222" strokeWidth="1.5" />
    </svg>
    <span className="absolute left-[26px] top-0 text-[9px] font-bold leading-[12px] text-black">N</span>
    <div className="absolute left-px top-[950px]">
      <Shield />
    </div>
    <span className="absolute left-[558px] top-[975px] whitespace-nowrap text-[13px] leading-[18px] tracking-[-0.2px] text-[#222]">700 m</span>
    <span className="absolute left-[1091px] top-[990px] whitespace-nowrap text-[12px] leading-4 text-[#0c4a12]">SIGMENA</span>
  </div>
);

/* ---------- status bar ---------- */

const Spin = () => (
  <div className="flex h-full w-[14px] shrink-0 items-center justify-center border-l border-[#b4b4b4] bg-[#f6f6f6]">
    <svg width="8" height="13" viewBox="0 0 8 13" fill="#555">
      <path d="M0 4.500h8L5 1H3zM0 8.500h8L5 12H3z" />
    </svg>
  </div>
);

const StatusBar = () => (
  <div className="flex h-[24px] shrink-0 items-start overflow-hidden bg-[#efefef] pl-px pt-[3px] text-[11.4px] leading-4 tracking-[-0.5px] text-black">
    <div className="flex h-6 w-[255px] shrink-0 items-center rounded-[3px] border border-[#b4b4b4] bg-[#fefefe] pl-[7px]">
      <svg width="14" height="14" viewBox="0 0 14 14" fill="none" stroke="#8c8c8c" strokeWidth="1.5">
        <circle cx="5.5" cy="5.5" r="4.3" />
        <path d="m8.500 8.500 4.500 4.500" />
      </svg>
      <span className="ml-[6px] whitespace-nowrap text-[12px] tracking-[-0.66px] text-[#808080]">Escriba para localizar (Ctrl+K)</span>
    </div>
    <div className="flex h-6 flex-1 items-center whitespace-nowrap">
      <span className="ml-2 w-[476px] shrink-0">3 legend entries removed.</span>
      <span className="w-[63px] shrink-0">Coordenada</span>
      <div className="flex h-6 w-[98px] shrink-0 items-center rounded-[3px] border border-[#b4b4b4] bg-[#fefefe] pl-[6px] tracking-[-0.18px]">529035,4596560</div>
      <svg width="18" height="18" viewBox="0 0 18 18" fill="none" className="ml-px shrink-0">
        <path d="M3 3c1-2 4-1 5 2l4 6c2 2 2 5-1 5s-5-2-6-5z" fill="#ccc" stroke="#333" strokeWidth="1.4" />
        <path d="m5 3 6 9M3 6l5-3M4.500 9l5-4M7 12l5-4" stroke="#333" />
        <circle cx="12" cy="12" r="3.6" fill="#e9e9e9" stroke="#444" strokeWidth="1.5" />
        <path d="M11 5c2 1 3 0 5-3" stroke="#333" />
      </svg>
      <span className="ml-3 w-[35px] shrink-0">Escala</span>
      <div className="flex h-6 w-20 shrink-0 items-center rounded-[3px] border border-[#b4b4b4] bg-[#fefefe] pl-1">
        <span className="w-14 tracking-[-0.1px]">1:9573</span>
        <div className="flex h-full w-[18px] items-center justify-center border-l border-[#b4b4b4] bg-[#f6f6f6]">
          <svg width="8" height="5" viewBox="0 0 8 5"><path d="M0 .5h8L5 4H3z" fill="#555" /></svg>
        </div>
      </div>
      <svg width="13" height="16" viewBox="0 0 13 16" fill="none" className="ml-3 shrink-0">
        <path d="M3 7V4.500c0-4 7-4 7 0V7" stroke="#777" strokeWidth="1.5" />
        <rect x=".5" y="7" width="12" height="8.5" rx="1" fill="#5f6664" />
      </svg>
      <span className="ml-2 w-[62px] shrink-0">Amplificador</span>
      <div className="flex h-6 w-[88px] shrink-0 items-center justify-between rounded-[3px] border border-[#b4b4b4] bg-[#fefefe] pl-1 tracking-[-0.2px]">
        100%
        <Spin />
      </div>
      <span className="ml-2 w-[52px] shrink-0 tracking-[-0.4px]">Rotación</span>
      <div className="flex h-6 w-[84px] shrink-0 items-center justify-between rounded-[3px] border border-[#b4b4b4] bg-[#fefefe] pl-1 tracking-[-0.1px]">
        0,0 °
        <Spin />
      </div>
      <div className="ml-[6px] flex shrink-0"><Check on /></div>
      <span className="ml-[3px] w-[78px] shrink-0 tracking-[-0.4px]">Representar</span>
      <svg width="16" height="14" viewBox="0 0 16 14" fill="none" stroke="#666" strokeWidth=".8" className="shrink-0">
        <ellipse cx="8" cy="7" rx="7.3" ry="6.3" fill="#b9b9b9" />
        <path d="M.8 7h14.400M2 4h12M2 10h12M8 .7v12.600" />
        <ellipse cx="8" cy="7" rx="3.800" ry="6.3" />
      </svg>
      <span className="ml-1 w-[79px] shrink-0 tracking-[-0.3px]">EPSG:25830</span>
      <svg width="18" height="16" viewBox="0 0 18 16" className="shrink-0">
        <ellipse cx="8.5" cy="6.5" rx="8.5" ry="6" fill="#5f6664" />
        <path d="m9 11 7 4-2-6z" fill="#5f6664" />
        <path d="M3.500 5.500h2v2h-2zM7.500 5.500h2v2h-2zM11.500 5.500h2v2h-2z" fill="#fff" />
      </svg>
    </div>
  </div>
);

export default function App() {
  return (
    <div className="flex h-[1123px] w-[1589px] flex-col overflow-hidden bg-[#efefef] font-['Open_Sans',sans-serif]">
      <MenuBar />
      <div className="h-px shrink-0 bg-[#d6d6d6]" />
      <NavigationBar />
      <div className="h-px shrink-0 bg-[#b4b4b4]" />
      <EditingBar />
      <div className="h-[2px] shrink-0 bg-[#b4b4b4]" />
      <div className="flex min-h-0 flex-1">
        <LayersPanel />
        <div className="flex w-[6px] shrink-0 items-center justify-center bg-[#efefef]">
          <div className="flex flex-col gap-[2px]">
            {[0, 1, 2, 3, 4, 5].map((i) => (
              <div key={i} className="h-px w-px bg-[#aaa]" />
            ))}
          </div>
        </div>
        <MapCanvas />
      </div>
      <StatusBar />
    </div>
  );
}
